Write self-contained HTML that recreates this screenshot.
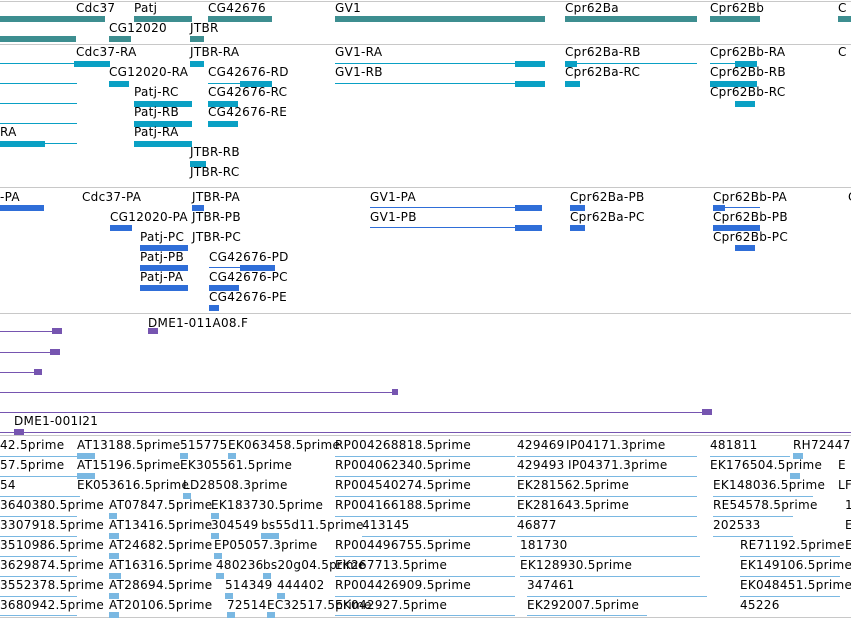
<!DOCTYPE html>
<html><head><meta charset="utf-8"><style>
body{margin:0;width:851px;height:621px;overflow:hidden;background:#fff;position:relative;font-family:"DejaVu Sans","Liberation Sans",sans-serif}
div,span{position:absolute}
span{font-size:12px;line-height:14px;color:#000;white-space:nowrap;letter-spacing:0.3px}
.s{left:0;width:851px;height:1px;background:#c8c8c8}
.g{background:#3d8e90;height:6px}
.r{background:#0aa0c4;height:6px}
.rl{background:#0aa0c4;height:1px}
.p{background:#2f6ed8;height:6px}
.pl{background:#2f6ed8;height:1px}
.v{background:#7655b0;height:1px}
.vb{background:#7655b0;height:6px}
.c{background:#7ab8e2;height:1px}
.cb{background:#7ab8e2;height:6px}
</style></head><body>
<div class="s" style="top:1px"></div>
<div class="s" style="top:44px"></div>
<div class="s" style="top:187px"></div>
<div class="s" style="top:313px"></div>
<div class="s" style="top:435px"></div>
<div class="s" style="top:617px"></div>

<span style="left:76px;top:1px">Cdc37</span><div class="g" style="left:0;top:16px;width:105px"></div>
<span style="left:134px;top:1px">Patj</span><div class="g" style="left:134px;top:16px;width:58px"></div>
<span style="left:208px;top:1px">CG42676</span><div class="g" style="left:208px;top:16px;width:64px"></div>
<span style="left:335px;top:1px">GV1</span><div class="g" style="left:335px;top:16px;width:210px"></div>
<span style="left:565px;top:1px">Cpr62Ba</span><div class="g" style="left:565px;top:16px;width:132px"></div>
<span style="left:710px;top:1px">Cpr62Bb</span><div class="g" style="left:710px;top:16px;width:50px"></div>
<span style="left:838px;top:1px">C</span><div class="g" style="left:838px;top:16px;width:13px"></div>
<div class="g" style="left:0;top:36px;width:76px"></div>
<span style="left:109px;top:21px">CG12020</span><div class="g" style="left:109px;top:36px;width:22px"></div>
<span style="left:190px;top:21px">JTBR</span><div class="g" style="left:190px;top:36px;width:14px"></div>

<div class="rl" style="left:0;top:63px;width:110px"></div><div class="r" style="left:74px;top:61px;width:36px"></div>
<span style="left:76px;top:45px">Cdc37-RA</span>
<span style="left:190px;top:45px">JTBR-RA</span><div class="r" style="left:190px;top:61px;width:14px"></div>
<span style="left:335px;top:45px">GV1-RA</span><div class="rl" style="left:335px;top:63px;width:210px"></div><div class="r" style="left:515px;top:61px;width:30px"></div>
<span style="left:565px;top:45px">Cpr62Ba-RB</span><div class="rl" style="left:565px;top:63px;width:132px"></div><div class="r" style="left:565px;top:61px;width:12px"></div>
<span style="left:710px;top:45px">Cpr62Bb-RA</span><div class="rl" style="left:710px;top:63px;width:47px"></div><div class="r" style="left:735px;top:61px;width:22px"></div>
<span style="left:838px;top:45px">C</span>
<div class="rl" style="left:0;top:83px;width:77px"></div>
<span style="left:109px;top:65px">CG12020-RA</span><div class="r" style="left:109px;top:81px;width:20px"></div>
<span style="left:208px;top:65px">CG42676-RD</span><div class="rl" style="left:208px;top:83px;width:64px"></div><div class="r" style="left:240px;top:81px;width:32px"></div>
<span style="left:335px;top:65px">GV1-RB</span><div class="rl" style="left:335px;top:83px;width:210px"></div><div class="r" style="left:515px;top:81px;width:30px"></div>
<span style="left:565px;top:65px">Cpr62Ba-RC</span><div class="r" style="left:565px;top:81px;width:15px"></div>
<span style="left:710px;top:65px">Cpr62Bb-RB</span><div class="r" style="left:710px;top:81px;width:47px"></div>
<div class="rl" style="left:0;top:103px;width:77px"></div>
<span style="left:134px;top:85px">Patj-RC</span><div class="r" style="left:134px;top:101px;width:58px"></div>
<span style="left:208px;top:85px">CG42676-RC</span><div class="r" style="left:208px;top:101px;width:30px"></div>
<span style="left:710px;top:85px">Cpr62Bb-RC</span><div class="r" style="left:735px;top:101px;width:20px"></div>
<div class="rl" style="left:0;top:123px;width:77px"></div>
<span style="left:134px;top:105px">Patj-RB</span><div class="r" style="left:134px;top:121px;width:58px"></div>
<span style="left:208px;top:105px">CG42676-RE</span><div class="r" style="left:208px;top:121px;width:30px"></div>
<span style="left:0;top:125px">RA</span><div class="r" style="left:0;top:141px;width:45px"></div><div class="rl" style="left:0;top:143px;width:77px"></div>
<span style="left:134px;top:125px">Patj-RA</span><div class="r" style="left:134px;top:141px;width:58px"></div>
<span style="left:190px;top:145px">JTBR-RB</span><div class="r" style="left:190px;top:161px;width:16px"></div>
<span style="left:190px;top:165px">JTBR-RC</span>

<span style="left:0;top:190px">-PA</span><div class="p" style="left:0;top:205px;width:44px"></div>
<span style="left:82px;top:190px">Cdc37-PA</span>
<span style="left:192px;top:190px">JTBR-PA</span><div class="p" style="left:192px;top:205px;width:12px"></div>
<span style="left:370px;top:190px">GV1-PA</span><div class="pl" style="left:370px;top:207px;width:172px"></div><div class="p" style="left:515px;top:205px;width:27px"></div>
<span style="left:570px;top:190px">Cpr62Ba-PB</span><div class="p" style="left:570px;top:205px;width:15px"></div>
<span style="left:713px;top:190px">Cpr62Bb-PA</span><div class="pl" style="left:713px;top:207px;width:47px"></div><div class="p" style="left:713px;top:205px;width:12px"></div>
<span style="left:848px;top:190px">C</span>
<span style="left:110px;top:210px">CG12020-PA</span><div class="p" style="left:110px;top:225px;width:22px"></div>
<span style="left:192px;top:210px">JTBR-PB</span>
<span style="left:370px;top:210px">GV1-PB</span><div class="pl" style="left:370px;top:227px;width:172px"></div><div class="p" style="left:515px;top:225px;width:27px"></div>
<span style="left:570px;top:210px">Cpr62Ba-PC</span><div class="p" style="left:570px;top:225px;width:15px"></div>
<span style="left:713px;top:210px">Cpr62Bb-PB</span><div class="p" style="left:713px;top:225px;width:47px"></div>
<span style="left:140px;top:230px">Patj-PC</span><div class="p" style="left:140px;top:245px;width:48px"></div>
<span style="left:192px;top:230px">JTBR-PC</span>
<span style="left:713px;top:230px">Cpr62Bb-PC</span><div class="p" style="left:735px;top:245px;width:20px"></div>
<span style="left:140px;top:250px">Patj-PB</span><div class="p" style="left:140px;top:265px;width:48px"></div>
<span style="left:209px;top:250px">CG42676-PD</span><div class="pl" style="left:209px;top:267px;width:66px"></div><div class="p" style="left:240px;top:265px;width:35px"></div>
<span style="left:140px;top:270px">Patj-PA</span><div class="p" style="left:140px;top:285px;width:48px"></div>
<span style="left:209px;top:270px">CG42676-PC</span><div class="p" style="left:209px;top:285px;width:30px"></div>
<span style="left:209px;top:290px">CG42676-PE</span><div class="p" style="left:209px;top:305px;width:10px"></div>

<span style="left:148px;top:316px">DME1-011A08.F</span><div class="vb" style="left:148px;top:328px;width:10px"></div>
<div class="v" style="left:0;top:331px;width:62px"></div><div class="vb" style="left:52px;top:328px;width:10px"></div>
<div class="v" style="left:0;top:352px;width:60px"></div><div class="vb" style="left:50px;top:349px;width:10px"></div>
<div class="v" style="left:0;top:372px;width:42px"></div><div class="vb" style="left:34px;top:369px;width:8px"></div>
<div class="v" style="left:0;top:392px;width:398px"></div><div class="vb" style="left:392px;top:389px;width:6px"></div>
<div class="v" style="left:0;top:412px;width:712px"></div><div class="vb" style="left:702px;top:409px;width:10px"></div>
<span style="left:14px;top:414px">DME1-001I21</span>
<div class="v" style="left:0;top:432px;width:851px"></div><div class="vb" style="left:14px;top:429px;width:10px"></div>

<span style="left:0;top:438px">42.5prime</span><span style="left:77px;top:438px">AT13188.5prime</span><span style="left:180px;top:438px">515775</span><span style="left:228px;top:438px">EK063458.5prime</span><span style="left:335px;top:438px">RP004268818.5prime</span><span style="left:517px;top:438px">429469</span><span style="left:566px;top:438px">IP04171.3prime</span><span style="left:710px;top:438px">481811</span><span style="left:793px;top:438px">RH72447</span>
<div class="c" style="left:0;top:456px;width:95px"></div><div class="cb" style="left:77px;top:453px;width:18px"></div><div class="cb" style="left:180px;top:453px;width:8px"></div><div class="cb" style="left:228px;top:453px;width:8px"></div><div class="c" style="left:335px;top:456px;width:180px"></div><div class="c" style="left:517px;top:456px;width:180px"></div><div class="c" style="left:710px;top:456px;width:80px"></div><div class="cb" style="left:793px;top:453px;width:10px"></div>
<span style="left:0;top:458px">57.5prime</span><span style="left:77px;top:458px">AT15196.5prime</span><span style="left:180px;top:458px">EK305561.5prime</span><span style="left:335px;top:458px">RP004062340.5prime</span><span style="left:517px;top:458px">429493</span><span style="left:568px;top:458px">IP04371.3prime</span><span style="left:710px;top:458px">EK176504.5prime</span><span style="left:838px;top:458px">E</span>
<div class="c" style="left:0;top:476px;width:95px"></div><div class="cb" style="left:77px;top:473px;width:18px"></div><div class="c" style="left:335px;top:476px;width:180px"></div><div class="c" style="left:517px;top:476px;width:180px"></div><div class="cb" style="left:790px;top:473px;width:10px"></div>
<span style="left:0;top:478px">54</span><span style="left:77px;top:478px">EK053616.5prime</span><span style="left:183px;top:478px">LD28508.3prime</span><span style="left:335px;top:478px">RP004540274.5prime</span><span style="left:517px;top:478px">EK281562.5prime</span><span style="left:713px;top:478px">EK148036.5prime</span><span style="left:838px;top:478px">LF</span>
<div class="c" style="left:0;top:496px;width:80px"></div><div class="cb" style="left:183px;top:493px;width:8px"></div><div class="c" style="left:335px;top:496px;width:180px"></div><div class="c" style="left:517px;top:496px;width:180px"></div><div class="c" style="left:713px;top:496px;width:100px"></div>
<span style="left:0;top:498px">3640380.5prime</span><span style="left:109px;top:498px">AT07847.5prime</span><span style="left:211px;top:498px">EK183730.5prime</span><span style="left:335px;top:498px">RP004166188.5prime</span><span style="left:517px;top:498px">EK281643.5prime</span><span style="left:713px;top:498px">RE54578.5prime</span><span style="left:845px;top:498px">1</span>
<div class="c" style="left:0;top:516px;width:77px"></div><div class="cb" style="left:109px;top:513px;width:8px"></div><div class="cb" style="left:211px;top:513px;width:8px"></div><div class="c" style="left:335px;top:516px;width:180px"></div><div class="c" style="left:517px;top:516px;width:180px"></div><div class="c" style="left:713px;top:516px;width:80px"></div>
<span style="left:0;top:518px">3307918.5prime</span><span style="left:109px;top:518px">AT13416.5prime</span><span style="left:211px;top:518px">304549</span><span style="left:261px;top:518px">bs55d11.5prime</span><span style="left:362px;top:518px">413145</span><span style="left:517px;top:518px">46877</span><span style="left:713px;top:518px">202533</span><span style="left:845px;top:518px">E</span>
<div class="c" style="left:0;top:536px;width:77px"></div><div class="cb" style="left:109px;top:533px;width:10px"></div><div class="cb" style="left:211px;top:533px;width:8px"></div><div class="cb" style="left:261px;top:533px;width:18px"></div><div class="c" style="left:362px;top:536px;width:150px"></div><div class="c" style="left:517px;top:536px;width:180px"></div><div class="c" style="left:713px;top:536px;width:80px"></div>
<span style="left:0;top:538px">3510986.5prime</span><span style="left:109px;top:538px">AT24682.5prime</span><span style="left:214px;top:538px">EP05057.3prime</span><span style="left:335px;top:538px">RP004496755.5prime</span><span style="left:520px;top:538px">181730</span><span style="left:740px;top:538px">RE71192.5prime</span><span style="left:845px;top:538px">E</span>
<div class="c" style="left:0;top:556px;width:77px"></div><div class="cb" style="left:109px;top:553px;width:10px"></div><div class="cb" style="left:214px;top:553px;width:8px"></div><div class="c" style="left:335px;top:556px;width:180px"></div><div class="c" style="left:520px;top:556px;width:180px"></div><div class="c" style="left:740px;top:556px;width:100px"></div>
<span style="left:0;top:558px">3629874.5prime</span><span style="left:109px;top:558px">AT16316.5prime</span><span style="left:216px;top:558px">480236</span><span style="left:263px;top:558px">bs20g04.5prime</span><span style="left:335px;top:558px">EK267713.5prime</span><span style="left:520px;top:558px">EK128930.5prime</span><span style="left:740px;top:558px">EK149106.5prime</span>
<div class="c" style="left:0;top:576px;width:77px"></div><div class="cb" style="left:109px;top:573px;width:12px"></div><div class="cb" style="left:216px;top:573px;width:8px"></div><div class="cb" style="left:263px;top:573px;width:8px"></div><div class="c" style="left:335px;top:576px;width:180px"></div><div class="c" style="left:520px;top:576px;width:180px"></div><div class="c" style="left:740px;top:576px;width:100px"></div>
<span style="left:0;top:578px">3552378.5prime</span><span style="left:109px;top:578px">AT28694.5prime</span><span style="left:225px;top:578px">514349</span><span style="left:277px;top:578px">444402</span><span style="left:335px;top:578px">RP004426909.5prime</span><span style="left:527px;top:578px">347461</span><span style="left:740px;top:578px">EK048451.5prime</span>
<div class="c" style="left:0;top:596px;width:77px"></div><div class="cb" style="left:109px;top:593px;width:10px"></div><div class="cb" style="left:225px;top:593px;width:8px"></div><div class="cb" style="left:277px;top:593px;width:8px"></div><div class="c" style="left:335px;top:596px;width:180px"></div><div class="c" style="left:527px;top:596px;width:180px"></div><div class="c" style="left:740px;top:596px;width:100px"></div>
<span style="left:0;top:598px">3680942.5prime</span><span style="left:109px;top:598px">AT20106.5prime</span><span style="left:227px;top:598px">72514</span><span style="left:267px;top:598px">EC32517.5prime</span><span style="left:335px;top:598px">EK042927.5prime</span><span style="left:527px;top:598px">EK292007.5prime</span><span style="left:740px;top:598px">45226</span>
<div class="c" style="left:0;top:615px;width:77px"></div><div class="cb" style="left:109px;top:612px;width:10px"></div><div class="cb" style="left:227px;top:612px;width:8px"></div><div class="cb" style="left:267px;top:612px;width:8px"></div><div class="c" style="left:335px;top:615px;width:180px"></div><div class="c" style="left:527px;top:615px;width:120px"></div>
</body></html>
